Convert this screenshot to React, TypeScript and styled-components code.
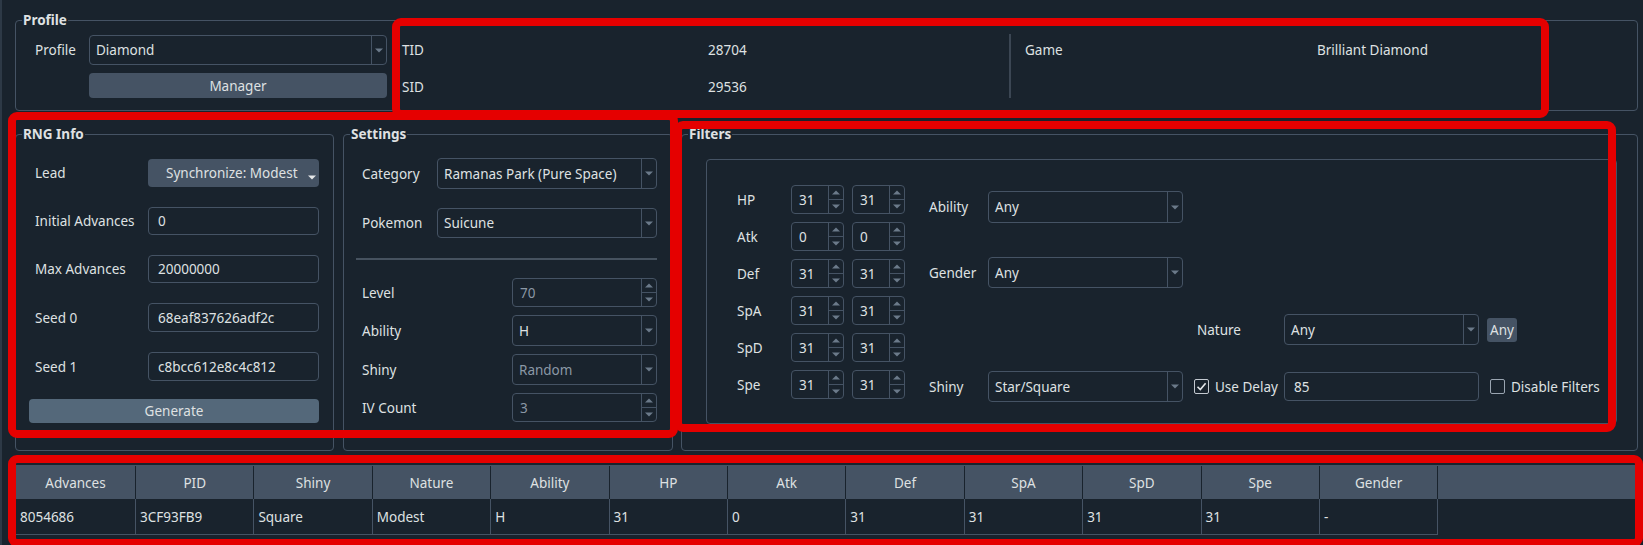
import React from "react";
import styled, { createGlobalStyle } from "styled-components";

const C = {
  bg: "#19232D",
  border: "#455364",
  button: "#455364",
  buttonHi: "#54687A",
  text: "#DFE1E2",
  dim: "#8b98a6",
  arrow: "#6b7a8a",
  red: "#e50000",
};

const GlobalStyle = createGlobalStyle`
  html, body { margin: 0; padding: 0; background: ${C.bg}; }
  body {
    font-family: "Noto Sans", "Open Sans", sans-serif;
    font-size: 13.5px;
    color: ${C.text};
  }
  * { box-sizing: border-box; }
`;

const Window = styled.div`
  position: relative;
  width: 1643px;
  height: 545px;
  overflow: hidden;
  background: ${C.bg};
  border-left: 2px solid #2d3946;
  padding: 12px 5px 0 13px;
  display: flex;
  flex-direction: column;
`;

const GroupBox = styled.fieldset<{ $w?: number; $h?: number }>`
  margin: 0;
  padding: 0;
  min-width: 0;
  border: 1px solid ${C.border};
  border-radius: 4px;
  ${(p) => (p.$w ? `width: ${p.$w}px; flex: none;` : "")}
  ${(p) => (p.$h ? `height: ${p.$h}px;` : "")}
`;

const Legend = styled.legend`
  margin-left: 6px;
  padding: 0 1px;
  font-weight: 700;
  font-size: 13.5px;
  line-height: 16px;
`;

const Body = styled.div<{ $pad: string }>`
  padding: ${(p) => p.$pad};
`;

/* ---------- generic widgets ---------- */

const Label = styled.span<{ $pl?: number; $pt?: number }>`
  padding-left: ${(p) => p.$pl ?? 0}px;
  padding-top: ${(p) => p.$pt ?? 0}px;
  white-space: nowrap;
`;

const Field = styled.div<{ $w?: number; $h?: number; $disabled?: boolean }>`
  display: flex;
  align-items: stretch;
  width: ${(p) => (p.$w ? `${p.$w}px` : "100%")};
  height: ${(p) => p.$h ?? 30}px;
  border: 1px solid ${C.border};
  border-radius: 4px;
  color: ${(p) => (p.$disabled ? C.dim : C.text)};
`;

const FieldText = styled.span<{ $pl?: number }>`
  flex: 1;
  display: flex;
  align-items: center;
  padding-left: ${(p) => p.$pl ?? 6}px;
  white-space: nowrap;
  overflow: hidden;
`;

const DropSection = styled.span`
  flex: none;
  width: 15px;
  border-left: 1px solid ${C.border};
  display: flex;
  align-items: center;
  justify-content: center;
`;

const SpinSection = styled.span`
  flex: none;
  width: 15px;
  border-left: 1px solid ${C.border};
  display: flex;
  flex-direction: column;
`;

const SpinHalf = styled.span<{ $lower?: boolean }>`
  flex: 1;
  display: flex;
  align-items: center;
  justify-content: center;
  ${(p) => (p.$lower ? `border-top: 1px solid ${C.border};` : "")}
`;

const Down = ({ color = C.arrow }: { color?: string }) => (
  <svg width="8" height="5" viewBox="0 0 8 5">
    <path d="M0 0.5 L8 0.5 L4 4.5 Z" fill={color} />
  </svg>
);

const Up = ({ color = C.arrow }: { color?: string }) => (
  <svg width="8" height="5" viewBox="0 0 8 5">
    <path d="M0 4.5 L8 4.5 L4 0.5 Z" fill={color} />
  </svg>
);

const Combo = ({
  value,
  w,
  h,
  disabled,
}: {
  value: string;
  w?: number;
  h?: number;
  disabled?: boolean;
}) => (
  <Field $w={w} $h={h} $disabled={disabled}>
    <FieldText>{value}</FieldText>
    <DropSection>
      <Down />
    </DropSection>
  </Field>
);

const Spin = ({
  value,
  w,
  h,
  disabled,
  pl,
}: {
  value: string;
  w?: number;
  h?: number;
  disabled?: boolean;
  pl?: number;
}) => (
  <Field $w={w} $h={h} $disabled={disabled}>
    <FieldText $pl={pl ?? 7}>{value}</FieldText>
    <SpinSection>
      <SpinHalf>
        <Up />
      </SpinHalf>
      <SpinHalf $lower>
        <Down />
      </SpinHalf>
    </SpinSection>
  </Field>
);

const Input = ({ value, h }: { value: string; h?: number }) => (
  <Field $h={h}>
    <FieldText $pl={9}>{value}</FieldText>
  </Field>
);

const Button = styled.div<{ $h: number; $hi?: boolean; $mt?: number }>`
  height: ${(p) => p.$h}px;
  margin-top: ${(p) => p.$mt ?? 0}px;
  background: ${(p) => (p.$hi ? C.buttonHi : C.button)};
  border-radius: 4px;
  display: flex;
  align-items: center;
  justify-content: center;
  color: ${C.text};
`;

const LeadButton = styled.div`
  height: 28px;
  background: ${C.button};
  border-radius: 4px;
  display: flex;
  align-items: center;
  padding: 0 3px 0 18px;
  gap: 6px;
`;

const LeadText = styled.span`
  flex: 1;
  white-space: nowrap;
`;

const LeadArrow = styled.span`
  align-self: flex-end;
  margin-bottom: 7px;
  display: flex;
`;

const SmallButton = styled.div`
  width: 30px;
  height: 24px;
  background: ${C.button};
  border-radius: 3px;
  display: flex;
  align-items: center;
  justify-content: center;
`;

const CheckRow = styled.div<{ $pl?: number }>`
  display: flex;
  align-items: center;
  gap: 6px;
  padding-left: ${(p) => p.$pl ?? 0}px;
  white-space: nowrap;
`;

const CheckBox = styled.span<{ $checked?: boolean }>`
  flex: none;
  width: 15px;
  height: 15px;
  border: 1px solid ${(p) => (p.$checked ? "#c4cad1" : "#9aa5b1")};
  border-radius: 2px;
  display: flex;
  align-items: center;
  justify-content: center;
`;

const Check = () => (
  <svg width="11" height="11" viewBox="0 0 11 11">
    <path
      d="M1.5 5.8 L4.3 8.6 L9.6 2.2"
      fill="none"
      stroke="#e3e6e9"
      strokeWidth="1.6"
    />
  </svg>
);

/* ---------- profile ---------- */

const ProfileBody = styled.div`
  display: flex;
  align-items: flex-start;
  padding: 7px 0 12px 19px;
`;

const FormGrid = styled.div<{ $cols: string; $rows: string; $gap: number }>`
  display: grid;
  grid-template-columns: ${(p) => p.$cols};
  grid-template-rows: ${(p) => p.$rows};
  row-gap: ${(p) => p.$gap}px;
  align-items: center;
`;

const ButtonCell = styled.div`
  grid-column: 2;
`;

const InfoGrid = styled.div<{ $cols: string; $ml: number }>`
  display: grid;
  margin-left: ${(p) => p.$ml}px;
  grid-template-columns: ${(p) => p.$cols};
  grid-template-rows: 30px 25px;
  row-gap: 8px;
  align-items: center;
`;

const VSep = styled.div`
  width: 2px;
  height: 64px;
  margin-top: -1px;
  background: #3b4653;
`;

/* ---------- middle row ---------- */

const MiddleRow = styled.div`
  display: flex;
  margin-top: 15px;
`;

const Gap = styled.div<{ $w: number }>`
  flex: none;
  width: ${(p) => p.$w}px;
`;

const HLine = styled.div`
  height: 2px;
  margin: 20px 0 18px;
  background: #46525f;
`;

const FilterFrame = styled.div`
  height: 265px;
  border: 1px solid ${C.border};
  border-radius: 4px;
  padding: 25px 0 0 30px;
  display: flex;
  align-items: flex-start;
`;

const StatGrid = styled.div`
  display: grid;
  grid-template-columns: 46px 53px 53px;
  grid-auto-rows: 29px;
  column-gap: 8px;
  row-gap: 8px;
  align-items: center;
`;

const RightArea = styled.div`
  margin: 6px 0 0 24px;
  display: flex;
  flex-direction: column;
`;

const FilterRow = styled.div<{ $mt: number; $h: number }>`
  display: grid;
  grid-template-columns: 59px 206px 90px 203px auto;
  height: ${(p) => p.$h}px;
  margin-top: ${(p) => p.$mt}px;
  align-items: center;
`;

/* ---------- table ---------- */

const COLS = "120px repeat(11, 118.4px) 1fr";

const Table = styled.div`
  margin-top: 14px;
  flex: 1;
  border: 1px solid ${C.border};
  border-bottom: none;
`;

const HeaderRow = styled.div`
  display: grid;
  grid-template-columns: ${COLS};
  height: 33px;
  background: ${C.button};
`;

const HeaderCell = styled.div`
  display: flex;
  align-items: center;
  justify-content: center;
  border-right: 1px solid ${C.bg};
  white-space: nowrap;
`;

const DataRow = styled.div`
  display: grid;
  grid-template-columns: ${COLS};
  height: 36px;
`;

const DataCell = styled.div`
  display: flex;
  align-items: center;
  padding-left: 4px;
  border-right: 1px solid ${C.border};
  border-bottom: 1px solid ${C.border};
  white-space: nowrap;
`;

/* ---------- annotation overlay ---------- */

const Highlight = styled.div<{ $x: number; $y: number; $w: number; $h: number }>`
  position: absolute;
  left: ${(p) => p.$x}px;
  top: ${(p) => p.$y}px;
  width: ${(p) => p.$w}px;
  height: ${(p) => p.$h}px;
  border: 8px solid ${C.red};
  border-radius: 9px;
  pointer-events: none;
`;

const headers = [
  "Advances",
  "PID",
  "Shiny",
  "Nature",
  "Ability",
  "HP",
  "Atk",
  "Def",
  "SpA",
  "SpD",
  "Spe",
  "Gender",
];
const row = [
  "8054686",
  "3CF93FB9",
  "Square",
  "Modest",
  "H",
  "31",
  "0",
  "31",
  "31",
  "31",
  "31",
  "-",
];

const stats: [string, string][] = [
  ["HP", "31"],
  ["Atk", "0"],
  ["Def", "31"],
  ["SpA", "31"],
  ["SpD", "31"],
  ["Spe", "31"],
];

export default function App() {
  return (
    <>
      <GlobalStyle />
      <Window>
        <GroupBox>
          <Legend>Profile</Legend>
          <ProfileBody>
            <FormGrid $cols="54px 298px" $rows="30px 25px" $gap={8}>
              <Label>Profile</Label>
              <Combo value="Diamond" />
              <ButtonCell>
                <Button $h={25}>Manager</Button>
              </ButtonCell>
            </FormGrid>
            <InfoGrid $cols="306px 301px" $ml={15}>
              <Label>TID</Label>
              <Label>28704</Label>
              <Label $pt={3}>SID</Label>
              <Label $pt={3}>29536</Label>
            </InfoGrid>
            <VSep />
            <InfoGrid $cols="292px auto" $ml={14}>
              <Label>Game</Label>
              <Label>Brilliant Diamond</Label>
            </InfoGrid>
          </ProfileBody>
        </GroupBox>

        <MiddleRow>
          <GroupBox $w={319} $h={325}>
            <Legend>RNG Info</Legend>
            <Body $pad="17px 14px 0 13px">
              <FormGrid
                $cols="119px 171px"
                $rows="28px 28px 28px 29px 29px"
                $gap={20}
              >
                <Label $pl={6}>Lead</Label>
                <LeadButton>
                  <LeadText>Synchronize: Modest</LeadText>
                  <LeadArrow>
                    <Down color="#e6e8ea" />
                  </LeadArrow>
                </LeadButton>
                <Label $pl={6}>Initial Advances</Label>
                <Input value="0" h={28} />
                <Label $pl={6}>Max Advances</Label>
                <Input value="20000000" h={28} />
                <Label $pl={6}>Seed 0</Label>
                <Input value="68eaf837626adf2c" h={29} />
                <Label $pl={6}>Seed 1</Label>
                <Input value="c8bcc612e8c4c812" h={29} />
              </FormGrid>
              <Button $h={24} $hi $mt={18}>
                Generate
              </Button>
            </Body>
          </GroupBox>
          <Gap $w={9} />
          <GroupBox $w={330} $h={325}>
            <Legend>Settings</Legend>
            <Body $pad="16px 15px 0 12px">
              <FormGrid $cols="81px 220px" $rows="31px 30px" $gap={19}>
                <Label $pl={6}>Category</Label>
                <Combo value="Ramanas Park (Pure Space)" h={31} />
                <Label $pl={6}>Pokemon</Label>
                <Combo value="Suicune" h={30} />
              </FormGrid>
              <HLine />
              <FormGrid $cols="156px 145px" $rows="29px 31px 31px 29px" $gap={8}>
                <Label $pl={6}>Level</Label>
                <Spin value="70" h={29} disabled />
                <Label $pl={6}>Ability</Label>
                <Combo value="H" h={31} />
                <Label $pl={6}>Shiny</Label>
                <Combo value="Random" h={31} disabled />
                <Label $pl={6}>IV Count</Label>
                <Spin value="3" h={29} disabled />
              </FormGrid>
            </Body>
          </GroupBox>
          <Gap $w={8} />
          <GroupBox $w={957} $h={325}>
            <Legend>Filters</Legend>
            <Body $pad="17px 20px 0 24px">
              <FilterFrame>
                <StatGrid>
                  {stats.map(([name, v]) => (
                    <React.Fragment key={name}>
                      <Label>{name}</Label>
                      <Spin value={v} h={29} />
                      <Spin value={v} h={29} />
                    </React.Fragment>
                  ))}
                </StatGrid>
                <RightArea>
                  <FilterRow $mt={0} $h={32}>
                    <Label>Ability</Label>
                    <Combo value="Any" w={195} h={32} />
                  </FilterRow>
                  <FilterRow $mt={34} $h={31}>
                    <Label>Gender</Label>
                    <Combo value="Any" w={195} h={31} />
                  </FilterRow>
                  <FilterRow $mt={26} $h={31}>
                    <span />
                    <span />
                    <Label $pl={3}>Nature</Label>
                    <Combo value="Any" w={195} h={31} />
                    <SmallButton>Any</SmallButton>
                  </FilterRow>
                  <FilterRow $mt={26} $h={31}>
                    <Label>Shiny</Label>
                    <Combo value="Star/Square" w={195} h={31} />
                    <CheckRow>
                      <CheckBox $checked>
                        <Check />
                      </CheckBox>
                      Use Delay
                    </CheckRow>
                    <Field $w={195} $h={29}>
                      <FieldText $pl={9}>85</FieldText>
                    </Field>
                    <CheckRow $pl={3}>
                      <CheckBox />
                      Disable Filters
                    </CheckRow>
                  </FilterRow>
                </RightArea>
              </FilterFrame>
            </Body>
          </GroupBox>
        </MiddleRow>

        <Table>
          <HeaderRow>
            {headers.map((h) => (
              <HeaderCell key={h}>{h}</HeaderCell>
            ))}
            <span />
          </HeaderRow>
          <DataRow>
            {row.map((v, i) => (
              <DataCell key={i}>{v}</DataCell>
            ))}
            <span />
          </DataRow>
        </Table>

        <Highlight $x={390} $y={18} $w={1157} $h={100} />
        <Highlight $x={6} $y={112} $w={670} $h={326} />
        <Highlight $x={672} $y={121} $w={942} $h={311} />
        <Highlight $x={6} $y={455} $w={1635} $h={92} />
      </Window>
    </>
  );
}
